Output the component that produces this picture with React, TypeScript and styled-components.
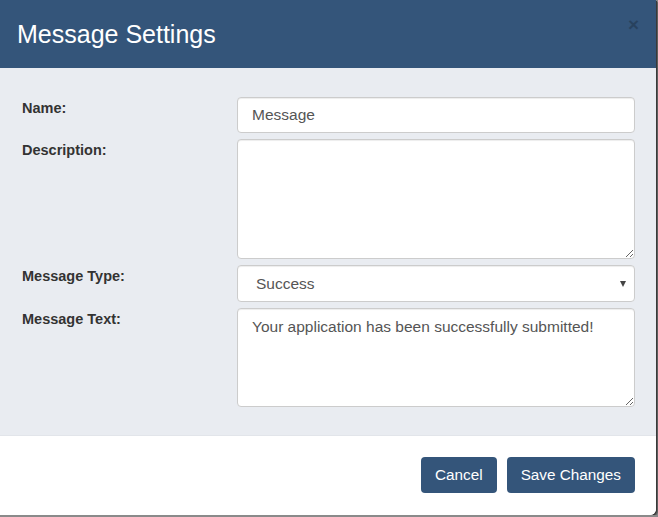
import React from "react";
import styled, { createGlobalStyle } from "styled-components";

const Global = createGlobalStyle`
  html, body { margin: 0; padding: 0; background: #8a8a8a; }
  body { font-family: "Liberation Sans", Arial, sans-serif; }
  * { box-sizing: border-box; }
`;

const Modal = styled.div`
  width: 656px;
  height: 515px;
  background: #fff;
  border-bottom-right-radius: 6px;
  box-shadow: 1px 1px 0 #3a3a3a, 2px 2px 1px rgba(0,0,0,0.35);
  display: flex;
  flex-direction: column;
  overflow: hidden;
`;

const Header = styled.div`
  height: 68px;
  background: #34557a;
  display: flex;
  justify-content: space-between;
  align-items: flex-start;
  padding: 0 17px;
`;

const Title = styled.h4`
  margin: 0;
  padding-top: 19px;
  color: #fff;
  font-size: 25px;
  font-weight: 400;
  line-height: 30px;
`;

const Close = styled.button`
  margin-top: 13px;
  margin-right: 0;
  border: 0;
  background: transparent;
  padding: 0;
  font-family: "Liberation Sans", Arial, sans-serif;
  font-size: 19px;
  font-weight: 700;
  line-height: 24px;
  color: #000;
  opacity: 0.22;
  cursor: pointer;
`;

const Body = styled.div`
  height: 368px;
  background: #e9ecf1;
  border-bottom: 1px solid #e2e5ea;
  padding: 29px 21px 0 22px;
  display: grid;
  grid-template-columns: 215px 398px;
  grid-auto-rows: auto;
  row-gap: 6px;
  align-content: start;
`;

const Label = styled.label`
  font-size: 14.5px;
  font-weight: 700;
  color: #333;
  line-height: 20px;
  padding-top: 1px;
`;

const fieldBase = `
  width: 100%;
  display: block;
  border: 1px solid #ccc;
  border-radius: 4px;
  background: #fff;
  font-family: "Liberation Sans", Arial, sans-serif;
  font-size: 15.5px;
  color: #555;
  box-shadow: inset 0 1px 1px rgba(0,0,0,0.075);
  outline: none;
`;

const Input = styled.input`
  ${fieldBase}
  height: 36px;
  padding: 6px 14px;
`;

const Area = styled.textarea<{ $h: number }>`
  ${fieldBase}
  height: ${(p) => p.$h}px;
  padding: 8px 14px;
  line-height: 20px;
  resize: vertical;
`;

const SelectWrap = styled.div`
  position: relative;
`;

const Select = styled.select`
  ${fieldBase}
  height: 37px;
  padding: 6px 14px 6px 18px;
  appearance: none;
  -webkit-appearance: none;
`;

const Arrow = styled.span`
  position: absolute;
  right: 9px;
  top: 16px;
  width: 0;
  height: 0;
  border-left: 3.5px solid transparent;
  border-right: 3.5px solid transparent;
  border-top: 6px solid #444;
  pointer-events: none;
`;

const Footer = styled.div`
  flex: 1;
  background: #fff;
  display: flex;
  justify-content: flex-end;
  align-items: flex-start;
  gap: 10px;
  padding: 21px 21px 0 0;
`;

const Button = styled.button`
  height: 36px;
  padding: 0 14px;
  background: #34557a;
  color: #fff;
  border: 0;
  border-radius: 4px;
  font-family: "Liberation Sans", Arial, sans-serif;
  font-size: 15.3px;
  cursor: pointer;
`;

export default function App() {
  return (
    <>
      <Global />
      <Modal>
        <Header>
          <Title>Message Settings</Title>
          <Close aria-label="Close">×</Close>
        </Header>
        <Body>
          <Label>Name:</Label>
          <Input defaultValue="Message" />
          <Label>Description:</Label>
          <Area $h={120} defaultValue="" />
          <Label>Message Type:</Label>
          <SelectWrap>
            <Select defaultValue="Success">
              <option>Success</option>
              <option>Info</option>
              <option>Warning</option>
              <option>Error</option>
            </Select>
            <Arrow />
          </SelectWrap>
          <Label>Message Text:</Label>
          <Area $h={99} defaultValue="Your application has been successfully submitted!" />
        </Body>
        <Footer>
          <Button>Cancel</Button>
          <Button>Save Changes</Button>
        </Footer>
      </Modal>
    </>
  );
}
